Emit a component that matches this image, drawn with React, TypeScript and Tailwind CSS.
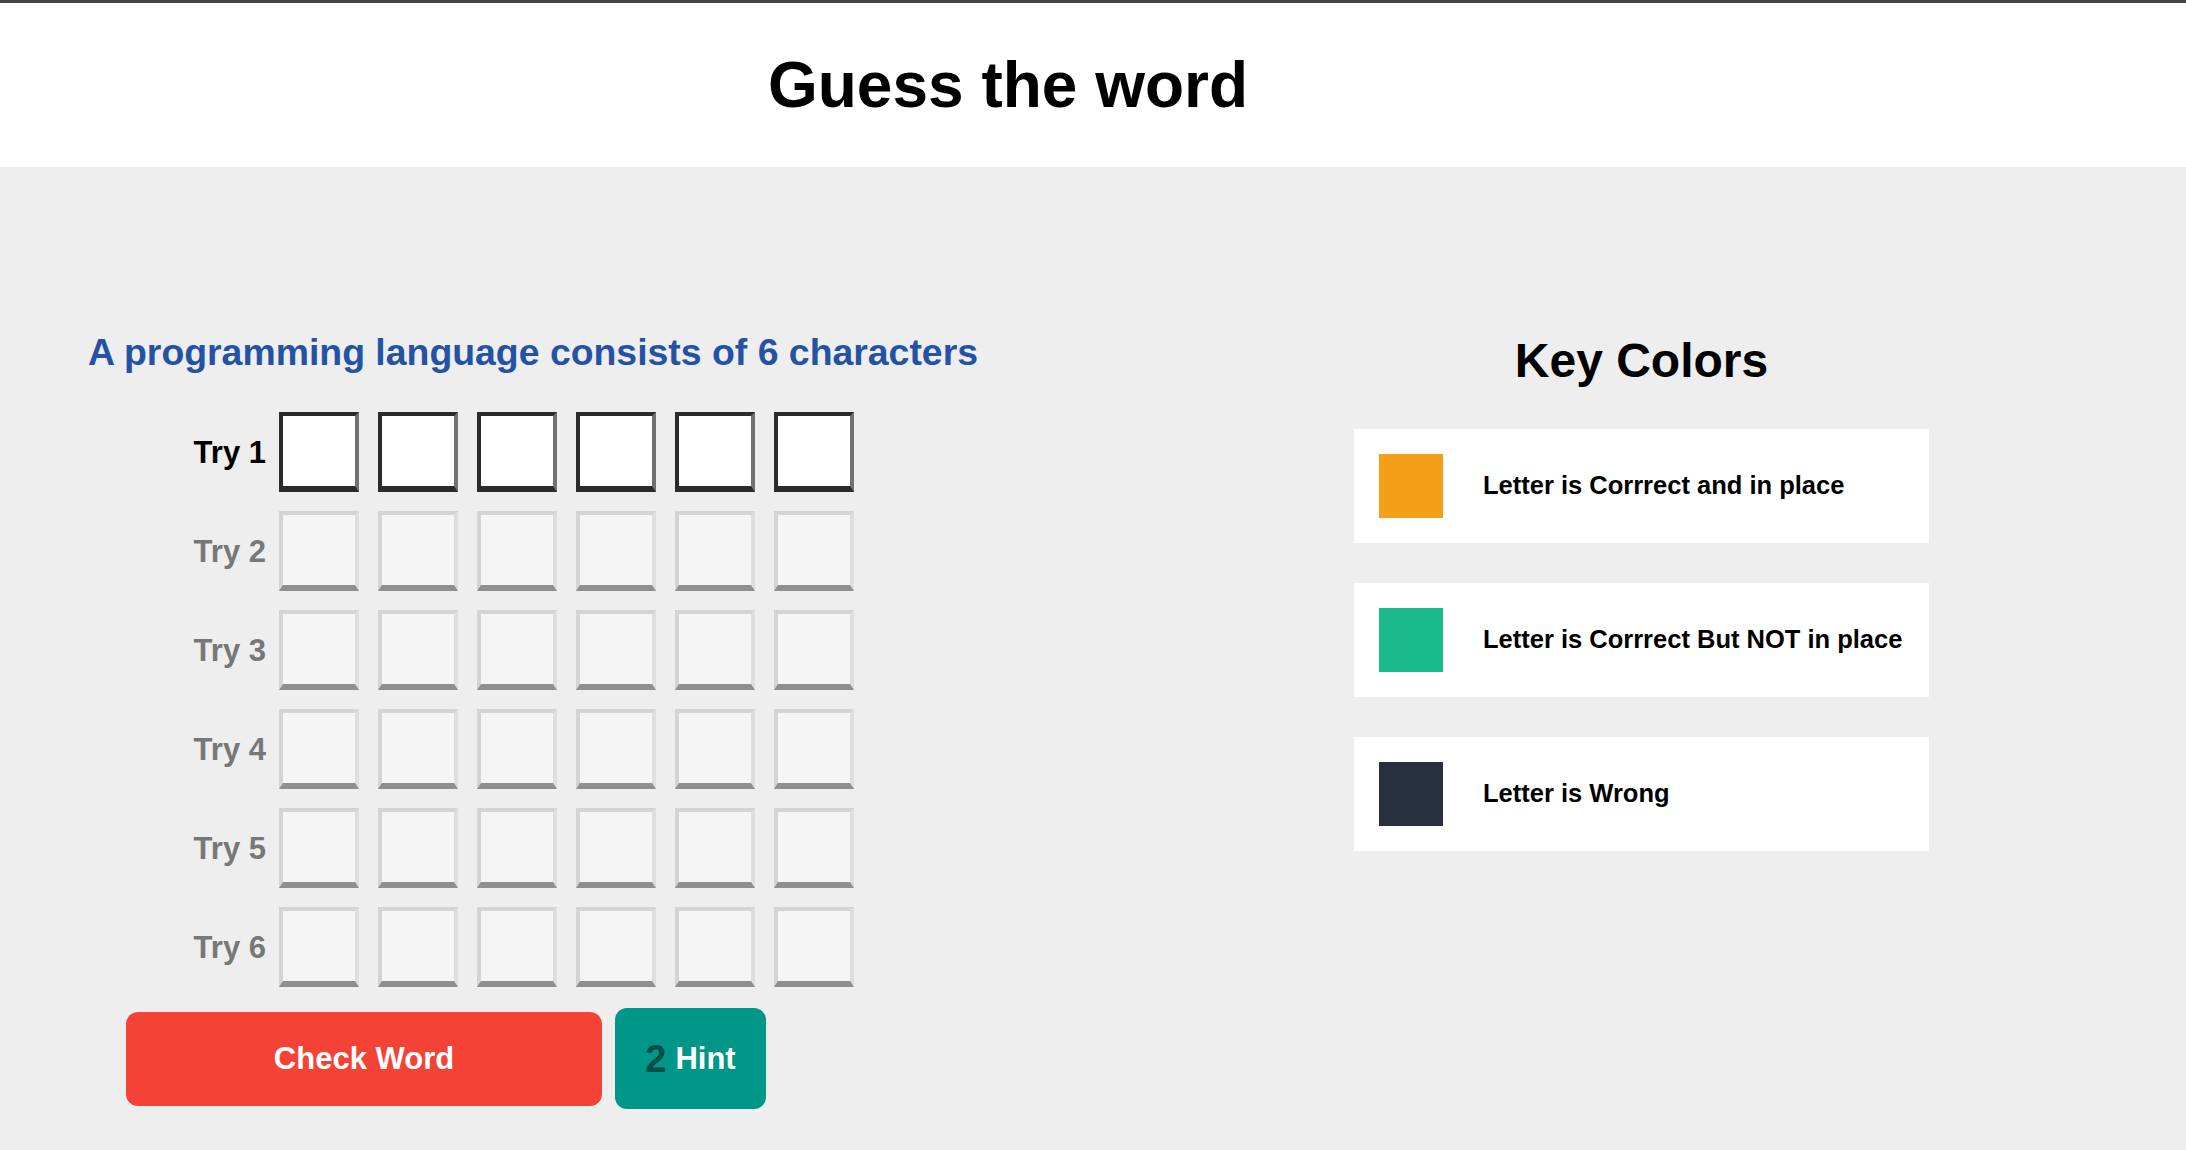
import React from "react";

const font = { fontFamily: '"Liberation Sans", Arial, sans-serif' };

function Box({ active }: { active: boolean }) {
  return active ? (
    <div className="w-[80px] h-[80px] box-border bg-white border-t-4 border-l-4 border-r-4 border-b-[6px] border-t-[#2b2b2b] border-l-[#2b2b2b] border-r-[#727272] border-b-[#2b2b2b]" />
  ) : (
    <div className="w-[80px] h-[80px] box-border bg-[#f5f5f5] border-t-4 border-l-4 border-r-4 border-b-[6px] border-t-[#d4d4d4] border-l-[#d4d4d4] border-r-[#dedede] border-b-[#8f8f8f]" />
  );
}

const legend = [
  { color: "bg-[#f59e17]", text: "Letter is Corrrect and in place" },
  { color: "bg-[#1bba8b]", text: "Letter is Corrrect But NOT in place" },
  { color: "bg-[#283040]", text: "Letter is Wrong" },
];

export default function App() {
  return (
    <div style={font} className="min-h-screen bg-[#eeeeee] text-black">
      <div className="h-[3px] bg-[#444444]" />
      <header className="h-[164px] bg-white flex items-center justify-center pr-[170px]">
        <h1 className="text-[64px] font-bold leading-none">Guess the word</h1>
      </header>
      <main className="flex">
        <section className="flex-1 pl-[88px] pt-[167px] flex flex-col">
          <h2 className="text-[37.4px] font-bold leading-none text-[#2452a4]">
            A programming language consists of 6 characters
          </h2>
          <div className="mt-[41px] flex flex-col gap-[19px]">
            {[1, 2, 3, 4, 5, 6].map((r) => (
              <div key={r} className="flex items-center">
                <div
                  className={`w-[178px] text-right text-[31px] font-bold leading-none ${
                    r === 1 ? "text-black" : "text-[#777777]"
                  }`}
                >
                  Try {r}
                </div>
                <div className="ml-[13px] flex gap-[19px]">
                  {[0, 1, 2, 3, 4, 5].map((c) => (
                    <Box key={c} active={r === 1} />
                  ))}
                </div>
              </div>
            ))}
          </div>
          <div className="mt-[21px] ml-[38px] flex items-center gap-[13px]">
            <button className="w-[476px] h-[94px] rounded-[12px] bg-[#f44336] text-white text-[31px] font-bold">
              Check Word
            </button>
            <button className="w-[151px] h-[101px] rounded-[12px] bg-[#009688] text-white font-bold flex items-center justify-center">
              <span className="text-[38px] text-[#074d47] leading-none">2</span>
              <span className="text-[31px] leading-none ml-[9px]">Hint</span>
            </button>
          </div>
        </section>
        <aside className="w-[575px] mr-[257px] pt-[170px] flex flex-col">
          <h2 className="text-[48px] font-bold leading-none text-center">Key Colors</h2>
          <div className="mt-[44px] flex flex-col gap-[40px]">
            {legend.map((l) => (
              <div key={l.text} className="h-[114px] bg-white flex items-center pl-[25px]">
                <div className={`w-[64px] h-[64px] ${l.color}`} />
                <span className="ml-[40px] text-[25.5px] font-bold leading-none">{l.text}</span>
              </div>
            ))}
          </div>
        </aside>
      </main>
    </div>
  );
}
